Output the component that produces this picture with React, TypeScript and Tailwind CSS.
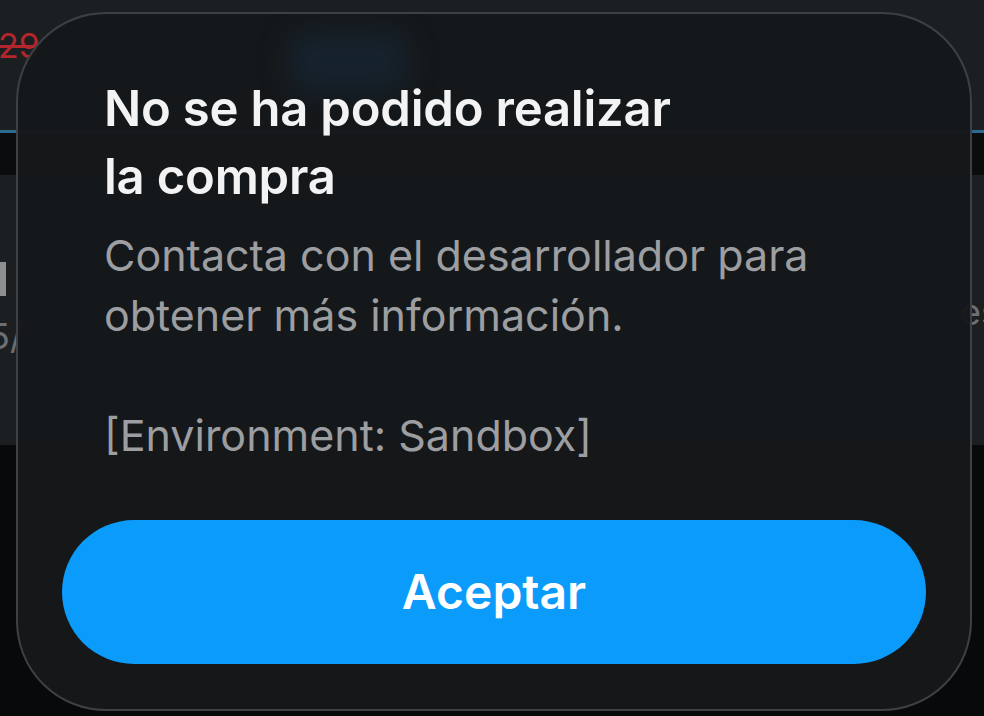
export default function App() {
  return (
    <div className="relative w-[984px] h-[716px] overflow-hidden bg-[#08090a] font-['Inter','Noto_Sans',sans-serif]">
      {/* Page behind the alert */}
      <div className="flex flex-col">
        <div className="h-[130px] bg-[#1c1f22] pt-[26px]">
          <span className="block text-[34px] leading-[40px] text-[#b3262b] line-through -ml-[2px]">29</span>
        </div>
        <div className="h-[3px] bg-[#2b6b8f]" />
        <div className="h-[42px] bg-[#0b0c0d]" />
        <div className="h-[270px] bg-[#1c1f22] flex flex-col pt-[87px]">
          <div className="flex justify-between items-start h-[34px]">
            <div className="w-[6px] h-[34px] bg-[#8d8e90]" />
            <span className="mt-[28px] text-[36px] leading-[44px] text-[#6d6f72] -mr-[16px]">es</span>
          </div>
          <div className="flex mt-[18px]">
            <span className="text-[36px] leading-[44px] text-[#6d6f72] -ml-[12px]">5/</span>
          </div>
        </div>
        <div className="flex-1 bg-[#08090a]" />
      </div>

      {/* Alert */}
      <div className="absolute left-[16px] top-[12px] w-[956px] h-[699px] rounded-[90px] border-2 border-[#3d4044] bg-[#16181a]/[0.97] overflow-hidden flex flex-col">
        <div className="absolute left-[270px] top-[18px] w-[120px] h-[60px] rounded-[20px] bg-[#16324a]/40 blur-[14px]" />
        <div className="relative flex flex-col pl-[86px] pr-[60px] pt-[61px]">
          <h1 className="text-[49px] leading-[68px] font-semibold text-[#f3f3f4] tracking-[-0.2px]">
            No se ha podido realizar
            <br />
            la compra
          </h1>
          <p className="mt-[14px] text-[43px] leading-[60px] text-[#9c9ea1]">
            Contacta con el desarrollador para
            <br />
            obtener más información.
            <br />
            <br />
            [Environment: Sandbox]
          </p>
        </div>
        <div className="relative flex-1 flex items-end px-[44px] pb-[45px]">
          <button className="w-full h-[144px] rounded-full bg-[#0b9bfb] text-white text-[48px] font-semibold">
            Aceptar
          </button>
        </div>
      </div>
    </div>
  );
}
